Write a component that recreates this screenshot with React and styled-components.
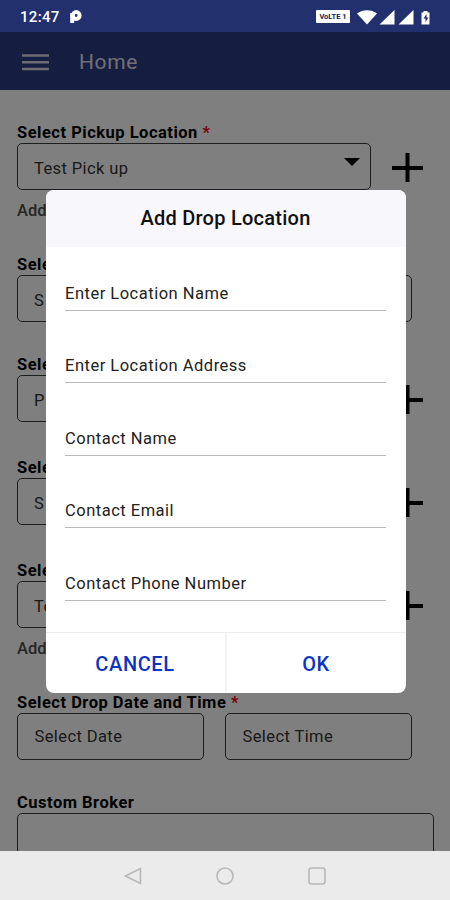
import React from 'react'
import styled, { createGlobalStyle } from 'styled-components'

const colors = {
  status: '#23306e',
  primary: '#2a3a80',
  accent: '#0a35c4',
  border: '#3c3c3c',
  required: '#f00010',
}

const GlobalStyle = createGlobalStyle`
  * {
    box-sizing: border-box;
  }
  body {
    margin: 0;
    font-family: Roboto, sans-serif;
    overflow: hidden;
  }
`

const Screen = styled.div`
  display: flex;
  flex-direction: column;
  width: 450px;
  height: 900px;
  overflow: hidden;
  background: #fff;
`

const StatusBar = styled.header`
  display: flex;
  align-items: center;
  height: 32px;
  flex: none;
  padding: 1px 18px 0 20px;
  background: ${colors.status};
  color: #fff;
`

const Clock = styled.span`
  width: 49px;
  font-size: 15px;
  font-weight: 500;
  letter-spacing: 0.3px;
`

const StatusIcons = styled.div`
  display: flex;
  align-items: center;
  margin-left: auto;
`

const NetworkBadge = styled.span`
  width: 34px;
  height: 13px;
  margin-right: 7px;
  border-radius: 1px;
  background: #fff;
  color: #17204c;
  font-size: 7.5px;
  font-weight: 700;
  line-height: 14px;
  text-align: center;
`

const Content = styled.div`
  position: relative;
  display: flex;
  flex-direction: column;
  flex: 1;
  min-height: 0;
  overflow: hidden;
`

const AppBar = styled.nav`
  display: flex;
  align-items: center;
  gap: 30px;
  height: 58px;
  flex: none;
  padding: 2px 22px 0;
  background: ${colors.primary};
`

const Title = styled.h1`
  margin: 0;
  color: #fff;
  opacity: 0.85;
  font-size: 21px;
  font-weight: 400;
  letter-spacing: 0.6px;
`

const Form = styled.main`
  padding: 33px 16px 0 17px;
`

const Group = styled.section`
  height: ${({ $height }) => $height}px;
`

const Label = styled.div`
  height: 20px;
  line-height: 20px;
  font-size: 16.5px;
  font-weight: 700;
  letter-spacing: 0.5px;
  white-space: nowrap;
`

const Required = styled.span`
  color: ${colors.required};
`

const Row = styled.div`
  display: flex;
  align-items: center;
`

const Box = styled.div`
  display: flex;
  align-items: center;
  justify-content: space-between;
  width: ${({ $width }) => $width}px;
  height: 47px;
  margin-right: 21px;
  padding: ${({ $tight }) => ($tight ? '0 10px 1px 16.5px' : '3px 10px 0 16px')};
  border: 1px solid ${colors.border};
  border-radius: 5px;
  color: #333;
  font-size: 16.5px;
  letter-spacing: 0.4px;
`

const Note = styled.div`
  margin-top: 11px;
  line-height: 20px;
  color: #4c4c4c;
  font-size: 16.5px;
  font-weight: 500;
`

const Scrim = styled.div`
  position: absolute;
  inset: 0;
  display: flex;
  align-items: flex-start;
  justify-content: center;
  padding: 157.5px 0 0 1px;
  background: rgba(0, 0, 0, 0.5);
`

const Dialog = styled.div`
  width: 360px;
  height: 503px;
  overflow: hidden;
  border-radius: 8px;
  background: #fff;
`

const DialogTitle = styled.h2`
  height: 57px;
  margin: 0;
  background: #f7f7fc;
  color: #111;
  font-size: 20px;
  font-weight: 500;
  letter-spacing: 0.25px;
  line-height: 57px;
  text-align: center;
`

const DialogBody = styled.div`
  height: 385.5px;
  padding: 0 19.5px;
`

const Field = styled.div`
  display: flex;
  align-items: flex-end;
  height: ${({ $first }) => ($first ? 64 : 72.5)}px;
  padding-bottom: 6px;
  border-bottom: 1.5px solid #b9b9b9;
  color: #222;
  font-size: 16.5px;
  letter-spacing: 0.5px;
  line-height: 20px;
`

const DialogFooter = styled.div`
  display: flex;
  height: 61px;
  border-top: 1px solid #ececec;
`

const DialogButton = styled.button`
  flex: 1;
  padding: 1px 0 0;
  border: 0;
  background: none;
  color: ${colors.accent};
  font-family: inherit;
  font-size: 20px;
  font-weight: 500;
  letter-spacing: 0.6px;
  & + & {
    border-left: 2px solid #f3f3f3;
  }
`

const NavBar = styled.footer`
  display: flex;
  align-items: center;
  justify-content: center;
  gap: 74px;
  height: 49px;
  flex: none;
  background: #ebebeb;
`

const PlusIcon = styled.svg`
  margin-top: 3px;
`

const CaretIcon = styled.svg`
  margin-top: -13px;
`

const Plus = () => (
  <PlusIcon width="31" height="30" viewBox="0 0 31 30">
    <path d="M15.5 0v29M0 15h31" stroke="#000" strokeWidth="4" />
  </PlusIcon>
)

const Caret = () => (
  <CaretIcon width="16" height="8" viewBox="0 0 16 8">
    <path d="M0 0h16L8 8z" />
  </CaretIcon>
)

const Menu = () => (
  <svg width="27" height="17" viewBox="0 0 27 17">
    <path d="M0 1.500h27M0 8.300h27M0 15h27" stroke="#d8d8e4" strokeWidth="2.4" />
  </svg>
)

const AppMark = () => (
  <svg width="13" height="14" viewBox="0 0 13 14">
    <path d="M3.200 13V3" stroke="#fff" strokeWidth="4" />
    <circle cx="7.200" cy="5.500" r="3.400" fill="none" stroke="#fff" strokeWidth="4" />
  </svg>
)

const SystemIcons = () => (
  <svg width="75" height="16" viewBox="0 0 75 16" fill="#fff">
    <path d="M0 4.500C5.500 0 14.500 0 20 4.500L10 15.500z" />
    <path d="M22.500 15.500L37.500 1v14.500zM41.500 15.500L56.500 1v14.500z" />
    <path d="M64.500 3.500h2V2h4v1.500h2v12h-8z" />
    <path d="M69.500 5l-3 4.500h2V13l3-4.500h-2z" fill={colors.status} />
  </svg>
)

const fields = [
  'Enter Location Name',
  'Enter Location Address',
  'Contact Name',
  'Contact Email',
  'Contact Phone Number',
]

const selects = [
  { label: 'Select Pickup Location', required: true, value: 'Test Pick up', note: 'Add', height: 132, width: 354, plus: true, caret: true },
  { label: 'Sele', value: 'S', height: 100, width: 395 },
  { label: 'Sele', value: 'P', height: 103, width: 354, plus: true },
  { label: 'Sele', value: 'S', height: 103, width: 354, plus: true },
  { label: 'Sele', value: 'Te', note: 'Add', height: 132, width: 354, plus: true },
]

const SelectGroup = ({ item }) => (
  <Group $height={item.height}>
    <Label>
      {item.label} {item.required && <Required>*</Required>}
    </Label>
    <Row>
      <Box $width={item.width}>
        {item.value}
        {item.caret && <Caret />}
      </Box>
      {item.plus && <Plus />}
    </Row>
    {item.note && <Note>{item.note}</Note>}
  </Group>
)

const App = () => (
  <Screen>
    <GlobalStyle />
    <StatusBar>
      <Clock>12:47</Clock>
      <AppMark />
      <StatusIcons>
        <NetworkBadge>VoLTE 1</NetworkBadge>
        <SystemIcons />
      </StatusIcons>
    </StatusBar>
    <Content>
      <AppBar>
        <Menu />
        <Title>Home</Title>
      </AppBar>
      <Form>
        {selects.map((item, i) => <SelectGroup key={i} item={item} />)}
        <Group $height={100}>
          <Label>Select Drop Date and Time <Required>*</Required></Label>
          <Row>
            <Box $width={187} $tight>Select Date</Box>
            <Box $width={187} $tight>Select Time</Box>
          </Row>
        </Group>
        <Group $height={67}>
          <Label>Custom Broker</Label>
          <Box $width={417} />
        </Group>
      </Form>
      <Scrim>
        <Dialog>
          <DialogTitle>Add Drop Location</DialogTitle>
          <DialogBody>
            {fields.map((name, i) => <Field key={name} $first={i === 0}>{name}</Field>)}
          </DialogBody>
          <DialogFooter>
            <DialogButton>CANCEL</DialogButton>
            <DialogButton>OK</DialogButton>
          </DialogFooter>
        </Dialog>
      </Scrim>
    </Content>
    <NavBar>
      <svg width="18" height="18" viewBox="0 0 18 18" fill="none" stroke="#b8b8b8" strokeWidth="1.6">
        <path d="M16.500 1.500v15L1.500 9z" />
      </svg>
      <svg width="18" height="18" viewBox="0 0 18 18" fill="none" stroke="#b8b8b8" strokeWidth="1.6">
        <circle cx="9" cy="9" r="8" />
      </svg>
      <svg width="18" height="18" viewBox="0 0 18 18" fill="none" stroke="#b8b8b8" strokeWidth="1.6">
        <rect x="1" y="1" width="16" height="16" rx="2.500" />
      </svg>
    </NavBar>
  </Screen>
)

export default App
